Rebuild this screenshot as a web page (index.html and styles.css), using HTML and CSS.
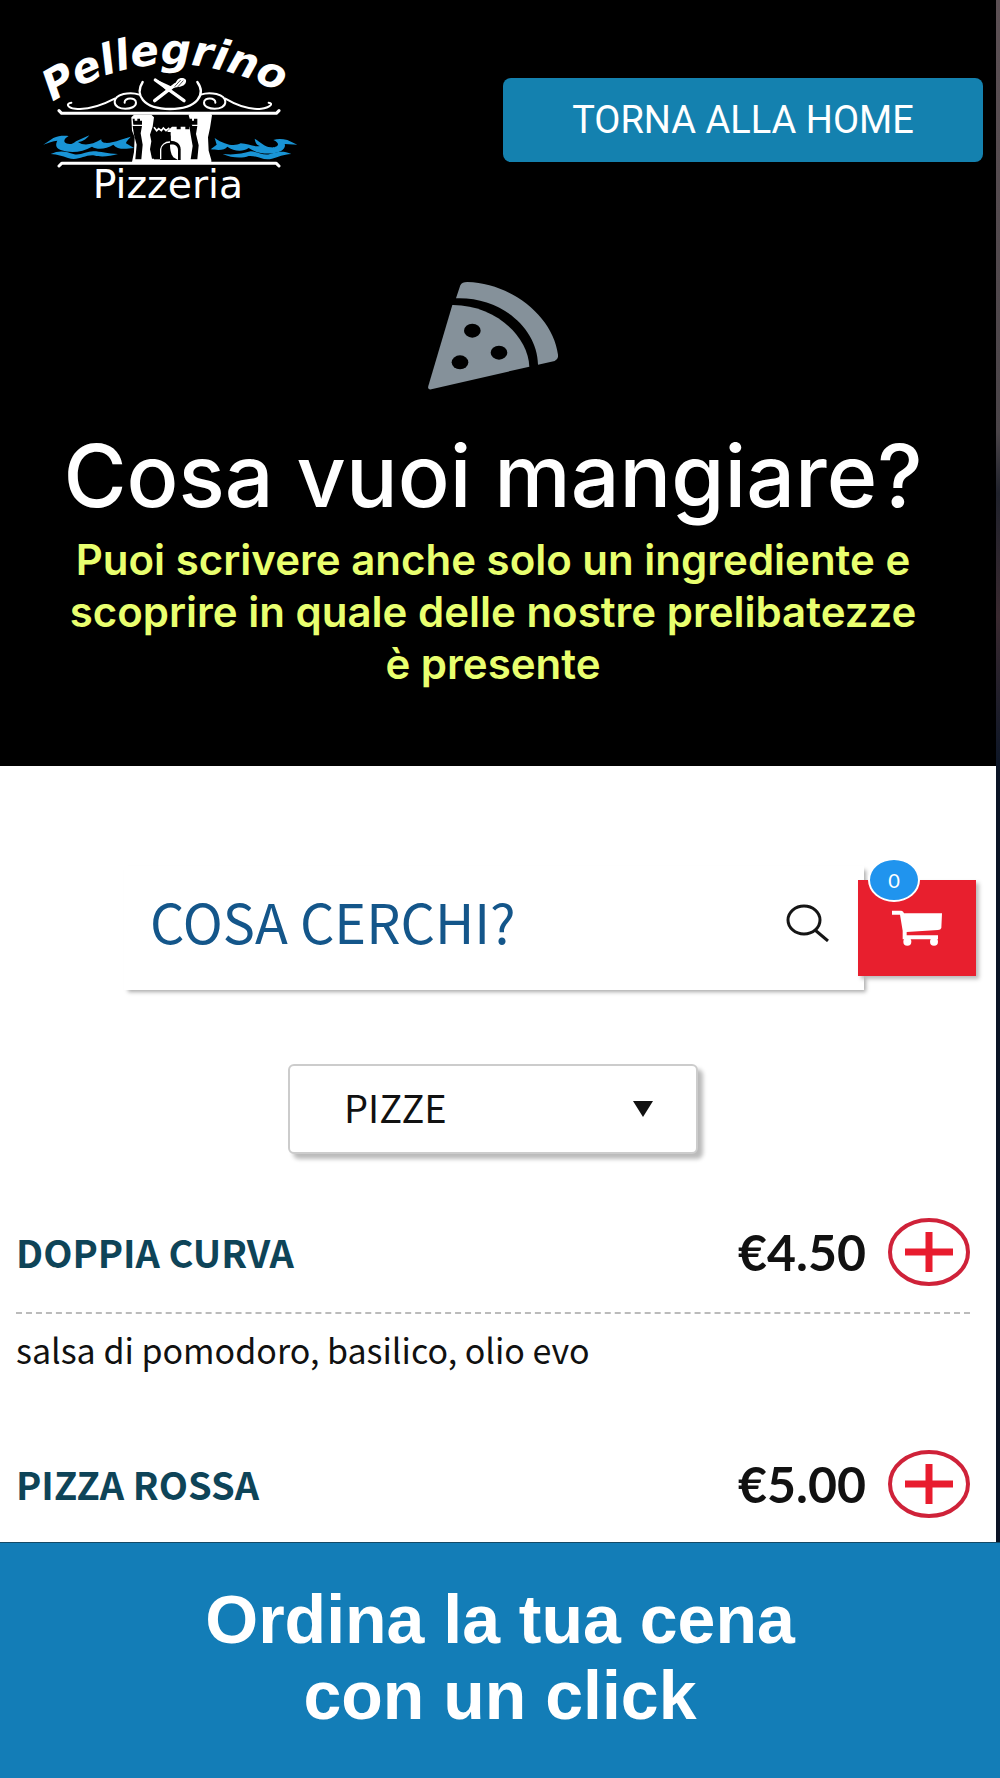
FILE: index.html
```
<!DOCTYPE html>
<html lang="it">
  <head>
    <meta charset="UTF-8" />
    <meta name="viewport" content="width=device-width, initial-scale=1.0" />
    <title>Pellegrino Pizzeria</title>
    <link rel="stylesheet" href="styles.css">
  </head>
  <body>
    <div class="schermo">
      <header class="testata">
        <div class="barra">
          <svg class="logo" viewBox="0 0 900 600" role="img" aria-label="Pellegrino Pizzeria">
            <path id="arco" d="M98 246 Q 450 14 850 256" fill="none" />
            <text class="logo-nome"><textPath href="#arco">Pellegrino</textPath></text>

            <!-- piatto e posate -->
            <g fill="none" stroke="#fff" stroke-linecap="round">
              <path stroke-width="7" d="M368 186C345 222 366 267 450 267S558 222 532 186" />
              <path stroke-width="6" d="M358 224C330 214 284 222 284 246c0 28 64 26 64 2 0-18-36-16-34 0M284 236c-38 20-82 34-118 30-26-3-28-16-12-18M542 224c28-10 74-2 74 22 0 28-64 26-64 2 0-18 36-16 34 0M616 236c34 20 72 34 108 30 26-3 38-16 22-18" />
              <path stroke-width="10" d="M406 180l86 62M404 242l62-48" />
            </g>
            <path fill="#fff" d="M404 176l34 34 18-10zM456 204l16-24c8-8 20-8 26 0 2 10-6 18-18 20z" />
            <path stroke="#000" stroke-width="2" d="M464 200l18-20M472 202l18-20" />
            <path fill="none" stroke="#fff" stroke-width="9" stroke-linecap="round" stroke-linejoin="round" d="M117 272l8 8h644l8-8M117 438l8-8h644l8 8" />

            <!-- castello -->
            <path fill="#fff" d="M334 292l8-8h52l8 8-4 28-8 24 4 20-4 24 6 28h56v-68l-10-14 14-14h14v8h12v-8h14v8h12v-8h10l-6-14-6-20 8-8h56l6 8-6 38-6 28 2 40 8 28v6H336l6-30 2-44-8-20z" />
            <path d="M338 296h6v6h8v-6h8v6h6v12h-26zM338 318h28l-4 22 6 34-4 44h-18l4-44-8-30zM508 296h8v6h6v-6h10v18h-22zM508 318h24l-4 24 8 34-4 42h-20l6-40-6-34z" />
            <path d="M402 336h50v82h-50z" />
            <path fill="none" stroke="#fff" stroke-width="5" d="M402 322l8 10 6-6 8 6 6-8 8 8 10-8" />
            <path d="M420 420v-32c0-34 62-34 62 0v32z" />
            <path fill="none" stroke="#fff" stroke-width="4" d="M422 418v-30c2-12 12-22 28-22" />
            <path fill="#fff" d="M450 374c14-2 24 4 24 16v30l-14-8c-8-10-10-26-10-38z" />

            <!-- onde -->
            <g fill="#1994d5">
              <path d="M70 374l30-20c16-8 34-8 46-6-22 12-14 26 8 24 8-2 12-6 14-8l40-18c-12 14-22 20-34 20 16 12 40 10 70-8-2 16 30 12 56 2l32-10c-10 12-14 16-14 20l24 14c-32 4-50 4-62-10-22 14-48 16-64 6-30 18-66 20-94 10-18-8-14-20-10-28-14 0-28 8-42 12z" />
              <path d="M92 402c28-14 50-6 68 0 20 6 40-8 60-8 22 0 42 8 74 8-26 8-54 10-74 4-26-2-46 18-76 8-18-6-30-10-52-12z" />
              <path d="M832 374l-30-14c-16-4-30-4-42 0 24 10 14 24-8 22-20-2-30-16-48-26 2 14 8 20 16 22-20 4-38-8-58-8-18 10-46 6-78-16l6 20-18 14c28 4 42 2 50-8 20 14 46 16 64 4 26 18 66 22 96 10 14-8 14-18 12-22z" />
              <path d="M814 402c-26-12-46-6-64 0-20 6-38-8-58-8-26 6-46 12-84 8 26 12 58 14 78 6 26-2 44 16 70 8 22-6 32-12 58-14z" />
            </g>
            <text class="logo-tipo" x="218" y="534">Pizzeria</text>
          </svg>
          <a class="torna" href="#">TORNA ALLA HOME</a>
        </div>

        <svg class="fetta" viewBox="0 0 390 324" aria-hidden="true">
          <path fill="#85919a" d="M84 49L97 10Q102 0 118 0C252 4 376 104 390 218Q392 232 380 237L330 248C328 136 216 44 84 49z" />
          <path fill="#85919a" d="M73 69C196 68 300 158 304 254L10 322Q-2 324 1 312z" />
          <ellipse cx="133" cy="146" rx="25" ry="21" />
          <ellipse cx="213" cy="212" rx="25" ry="21" />
          <ellipse cx="96" cy="241" rx="25" ry="21" />
        </svg>
        <h1>Cosa vuoi mangiare?</h1>
        <p class="sottotitolo">Puoi scrivere anche solo un ingrediente e scoprire in quale delle nostre prelibatezze è presente</p>
      </header>

      <main class="menu">
        <div class="ricerca">
          <form class="cerca" onsubmit="return false;">
            <input type="text" class="campo" placeholder="COSA CERCHI?" aria-label="Cosa cerchi?" />
            <button type="submit" class="lente" aria-label="Cerca">
              <svg viewBox="0 0 44 38" width="44" height="38" fill="none" stroke="#151515" stroke-width="3">
                <ellipse cx="18" cy="16" rx="16" ry="14" />
                <path d="M29 26l13 11" />
              </svg>
            </button>
          </form>
          <button type="button" class="carrello" aria-label="Carrello">
            <svg viewBox="0 0 150 108" width="50" height="36" fill="#fff">
              <path d="M0 2h28q6 0 8 8h114l-2 44q-2 6-10 6L44 66v10h94v12H32V62L24 14H0z" />
              <circle cx="46" cy="95" r="12" />
              <circle cx="126" cy="95" r="12" />
            </svg>
            <span class="contatore">0</span>
          </button>
        </div>

        <div class="categoria">
          <select aria-label="Categoria">
            <option>PIZZE</option>
          </select>
        </div>

        <article class="piatto">
          <div class="riga">
            <h2>DOPPIA CURVA</h2>
            <span class="prezzo">€4.50</span>
            <button type="button" class="aggiungi" aria-label="Aggiungi Doppia Curva">
              <svg viewBox="0 0 82 68" width="82" height="68" fill="none">
                <ellipse cx="41" cy="34" rx="39" ry="32" stroke="#cf2239" stroke-width="4" />
                <path stroke="#e81c2e" stroke-width="7" d="M17 34h48M41 14v40" />
              </svg>
            </button>
          </div>
          <p>salsa di pomodoro, basilico, olio evo</p>
        </article>

        <article class="piatto">
          <div class="riga">
            <h2>PIZZA ROSSA</h2>
            <span class="prezzo">€5.00</span>
            <button type="button" class="aggiungi" aria-label="Aggiungi Pizza Rossa">
              <svg viewBox="0 0 82 68" width="82" height="68" fill="none">
                <ellipse cx="41" cy="34" rx="39" ry="32" stroke="#cf2239" stroke-width="4" />
                <path stroke="#e81c2e" stroke-width="7" d="M17 34h48M41 14v40" />
              </svg>
            </button>
          </div>
        </article>
      </main>
    </div>

    <footer class="slogan">
      <p>Ordina la tua cena<br />con un click</p>
    </footer>
  </body>
</html>
```
FILE: styles.css
```
* {
  box-sizing: border-box;
}
body {
  margin: 0;
  min-height: 100vh;
  display: flex;
  flex-direction: column;
  background-color: #137db7;
  font-family: "Noto Sans CJK SC", "Open Sans", sans-serif;
}
h1,
h2,
p {
  margin: 0;
}
button {
  padding: 0;
  border: none;
  background: none;
  cursor: pointer;
}
svg {
  display: block;
}
/* il bordo destro lascia vedere lo sfondo */
.schermo {
  padding-right: 4px;
  background: linear-gradient(#5c5054, #4a4448 28%, #20222c 32%, #3a2a30 40%, #0b1526 50%, #0b1526);
}

/* testata */
.testata {
  padding: 20px 26px 76px 16px;
  background-color: #000;
  color: #fff;
  text-align: center;
}
.barra {
  display: flex;
  justify-content: space-between;
  align-items: center;
  margin: 0 -13px 0 4px;
}
.logo {
  width: 300px;
  height: 200px;
}
.logo-nome {
  font: italic bold 126px "DejaVu Sans", sans-serif;
  fill: #fff;
}
.logo-tipo {
  font: 118px "DejaVu Sans", sans-serif;
  fill: #fff;
}
.torna {
  width: 480px;
  border-radius: 8px;
  background-color: #1481af;
  color: #fff;
  font-family: Roboto, sans-serif;
  font-size: 38px;
  line-height: 84px;
  text-decoration: none;
}
.fetta {
  width: 130px;
  height: 108px;
  margin: 62px auto 40px;
}
h1 {
  margin-bottom: 12px;
  font-family: Inter, sans-serif;
  font-size: 86px;
  font-weight: 500;
  line-height: 92px;
}
.sottotitolo {
  padding: 0 40px;
  color: #e9ff6f;
  font-family: Inter, sans-serif;
  font-size: 42px;
  font-weight: 600;
  line-height: 52px;
}

/* menu */
.menu {
  padding: 100px 26px 24px 16px;
  background-color: #fff;
}
.ricerca {
  display: flex;
  align-items: center;
  margin: 0 -6px 0 108px;
}
.cerca {
  flex: 1;
  display: flex;
  align-items: center;
  height: 124px;
  padding: 0 34px 10px 26px;
  box-shadow: 3px 3px 4px -1px #aaa;
}
.campo {
  flex: 1;
  min-width: 0;
  padding: 0 0 6px;
  border: none;
  outline: none;
  color: #14568a;
  font-family: inherit;
  font-size: 54px;
}
.campo::placeholder {
  color: #14568a;
  opacity: 1;
}
.carrello {
  position: relative;
  display: flex;
  justify-content: center;
  align-items: center;
  width: 118px;
  height: 96px;
  margin-left: -6px;
  background-color: #e81f2e;
  box-shadow: 3px 3px 4px #bbb;
}
.contatore {
  position: absolute;
  top: -22px;
  left: 10px;
  width: 52px;
  height: 44px;
  border: 2px solid #fff;
  border-radius: 50%;
  background-color: #2094ee;
  color: #fff;
  font-family: Lato, sans-serif;
  font-size: 20px;
  line-height: 40px;
}
.categoria {
  display: grid;
  align-items: center;
  width: 410px;
  margin: 74px auto 64px;
}
.categoria select {
  grid-area: 1 / 1;
  appearance: none;
  height: 90px;
  padding: 0 54px 6px;
  border: 2px solid #ccc;
  border-radius: 6px;
  background-color: #fff;
  box-shadow: 5px 5px 4px #bbb;
  color: #111;
  font-family: inherit;
  font-size: 38px;
}
.categoria::after {
  content: "";
  grid-area: 1 / 1;
  justify-self: end;
  width: 20px;
  height: 16px;
  margin-right: 45px;
  background-color: #111;
  clip-path: polygon(0 0, 100% 0, 50% 100%);
  pointer-events: none;
}
.piatto + .piatto {
  margin-top: 76px;
}
.riga {
  display: flex;
  align-items: center;
  gap: 22px;
}
.piatto h2 {
  flex: 1;
  color: #0e4458;
  font-size: 38px;
  font-weight: bold;
  line-height: 68px;
}
.prezzo {
  color: #111;
  font-family: Lato, sans-serif;
  font-size: 50px;
  font-weight: bold;
  line-height: 68px;
}
.piatto p {
  margin-top: 26px;
  padding-top: 12px;
  border-top: 2px dashed #bbb;
  color: #111;
  font-size: 34px;
  line-height: 48px;
}

/* slogan in basso */
.slogan {
  flex: 1;
  padding: 38px 20px 40px;
  border-top: 1px solid #144a66;
  background-color: #137db7;
  color: #fff;
  font-family: "Liberation Sans", Arial, sans-serif;
  font-size: 68px;
  font-weight: bold;
  line-height: 76px;
  text-align: center;
}
```
